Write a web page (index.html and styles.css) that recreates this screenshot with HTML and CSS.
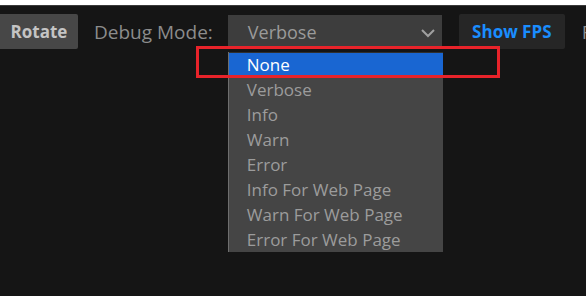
FILE: index.html
```html
<!DOCTYPE html>
<html>
<head>
<meta charset="utf-8">
<link rel="stylesheet" href="styles.css">
</head>
<body>
<div class="topstrip"></div>
<div class="toolbar">
  <button class="btn rotate">Rotate</button>
  <span class="label">Debug Mode:</span>
  <div class="select-wrap">
    <div class="select">
      <span>Verbose</span>
      <svg class="chev" width="16" height="10" viewBox="0 0 16 10"><path d="M2 2 L8 8 L14 2" fill="none" stroke="#a0a0a0" stroke-width="2"/></svg>
    </div>
    <ul class="list">
      <li class="sel">None</li>
      <li>Verbose</li>
      <li>Info</li>
      <li>Warn</li>
      <li>Error</li>
      <li>Info For Web Page</li>
      <li>Warn For Web Page</li>
      <li>Error For Web Page</li>
    </ul>
    <div class="highlight"></div>
  </div>
  <button class="btn fps">Show FPS</button>
  <span class="label cut">F</span>
</div>
</body>
</html>
```
FILE: styles.css
```css
html, body {
  margin: 0;
  padding: 0;
  background: #151515;
  width: 586px;
  height: 296px;
  overflow: hidden;
  font-family: "Open Sans", "Noto Sans", sans-serif;
}
.topstrip {
  height: 5px;
  background: #ffffff;
  border-bottom: 1px solid #3a3a3a;
}
.toolbar {
  display: flex;
  align-items: center;
  margin-top: 8px;
  height: 35px;
  white-space: nowrap;
}
.toolbar > * { flex-shrink: 0; }
.btn {
  border: none;
  height: 35px;
  font-family: inherit;
  font-weight: 700;
  font-size: 17px;
  padding: 0;
}
.rotate {
  width: 78px;
  background: #474747;
  color: #c4c4c4;
  border-radius: 0 2px 2px 0;
}
.label {
  color: #8c8c8c;
  font-size: 19px;
  margin-left: 16px;
}
.select-wrap {
  position: relative;
  margin-left: 15px;
}
.select {
  width: 214px;
  height: 34px;
  background: #3d3d3d;
  color: #9a9a9a;
  font-size: 18px;
  display: flex;
  align-items: center;
  justify-content: space-between;
  padding: 0 6px 0 20px;
  box-sizing: border-box;
}
.chev { margin-top: 2px; }
.list {
  position: absolute;
  left: 0;
  top: 37px;
  width: 215px;
  margin: 0;
  padding: 0;
  list-style: none;
  background: #454545;
  border-left: 1px solid #6e6e6e;
  box-sizing: border-box;
}
.list li {
  height: 25px;
  line-height: 25px;
  padding-left: 18px;
  color: #9c9c9c;
  font-size: 17px;
}
.list li.sel {
  background: #1966d2;
  color: #ffffff;
  border-top: 1px solid #2f2f2f;
  height: 24px;
  line-height: 24px;
}
.highlight {
  position: absolute;
  left: -32px;
  top: 31px;
  width: 304px;
  height: 32px;
  border: 3px solid #e8232a;
  box-sizing: border-box;
}
.fps {
  margin-left: 17px;
  width: 106px;
  background: #262626;
  color: #1a8dff;
  border-radius: 2px;
}
.cut {
  margin-left: 17px;
}
```
